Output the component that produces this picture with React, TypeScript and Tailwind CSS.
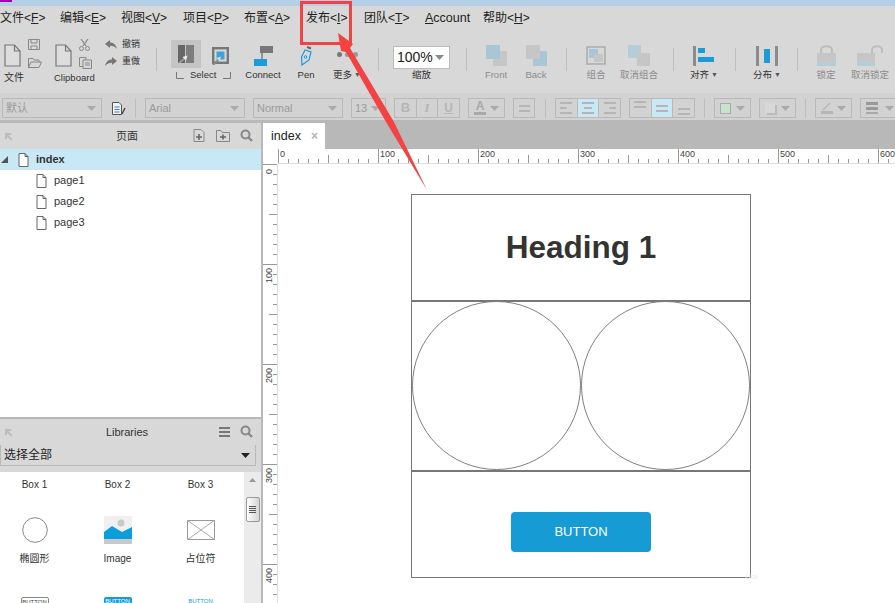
import React from 'react';

const font = { fontFamily: '"Liberation Sans", "Noto Sans CJK SC", sans-serif' };

const menus: [string, string, number][] = [
  ['文件', 'F', 60],
  ['编辑', 'E', 61],
  ['视图', 'V', 62],
  ['项目', 'P', 61],
  ['布置', 'A', 62],
  ['发布', 'I', 58],
  ['团队', 'T', 61],
];

const PageIcon = ({ w = 17, h = 23, c = '#777' }: { w?: number; h?: number; c?: string }) => (
  <svg width={w} height={h} viewBox="0 0 17 23" className="block shrink-0">
    <path d="M1 1H10.5L16 7V22H1Z M10.5 1V7H16" fill="#f4f4f4" fillOpacity="0.2" stroke={c} strokeWidth="1.2" />
  </svg>
);

const SmallPage = ({ c = '#666' }: { c?: string }) => (
  <svg width="11" height="14" viewBox="0 0 11 14" className="block shrink-0">
    <path d="M1 .5H7L10 3.5V13.5H1Z M7 .5V3.5H10" fill="#fff" stroke={c} />
  </svg>
);

const Caret = ({ c = '#999' }: { c?: string }) => (
  <svg width="9" height="5" viewBox="0 0 9 5" className="block shrink-0">
    <path d="M0 0H9L4.5 5Z" fill={c} />
  </svg>
);

const SelectBox = ({ w, label }: { w: number; label: string }) => (
  <div style={{ width: w }} className="h-[20px] shrink-0 border border-[#b9b9b9] flex items-center justify-between pl-[3px] pr-[5px]">
    <span className="text-[11px] text-[#9a9a9a]">{label}</span>
    <Caret c="#aaa" />
  </div>
);

const Sep = ({ h = 23, ml = 0 }: { h?: number; ml?: number }) => (
  <div style={{ height: h, marginLeft: ml }} className="w-px bg-[#bdbdbd] shrink-0" />
);

const Tool = ({ w, ml = 0, label, dark, caret, children }: { w: number; ml?: number; label: string; dark?: boolean; caret?: boolean; children?: React.ReactNode }) => (
  <div style={{ width: w, marginLeft: ml }} className="shrink-0 flex flex-col items-center">
    <div className="h-[24px] flex items-end justify-center">{children}</div>
    <div className={`mt-[3px] text-[9.5px] leading-[12px] whitespace-nowrap flex items-center gap-[2px] ${dark ? 'text-[#333]' : 'text-[#8c8c8c]'}`}>
      {label}
      {caret && <span className="text-[7px] text-[#555]">▼</span>}
    </div>
  </div>
);

const SegGroup = ({ items, active }: { items: React.ReactNode[]; active?: number }) => (
  <div className="flex w-[66px] h-[20px] border border-[#b9b9b9] shrink-0">
    {items.map((it, i) => (
      <div key={i} className={`flex-1 flex items-center justify-center ${i > 0 ? 'border-l border-[#b9b9b9]' : ''} ${active === i ? 'bg-[#c9e8f6]' : ''}`}>
        {it}
      </div>
    ))}
  </div>
);

const Lines = ({ widths, align }: { widths: number[]; align: string }) => (
  <div className={`flex flex-col gap-[3px] ${align}`}>
    {widths.map((w, i) => (
      <div key={i} style={{ width: w }} className="h-[2px] bg-[#b5b5b5]" />
    ))}
  </div>
);

const SwatchSel = ({ w = 37, children }: { w?: number; children: React.ReactNode }) => (
  <div style={{ width: w }} className="h-[20px] shrink-0 border border-[#b9b9b9] flex items-center justify-between pl-[5px] pr-[5px]">
    {children}
    <Caret c="#aaa" />
  </div>
);

const PanelHeader = ({ title, children }: { title: string; children: React.ReactNode }) => (
  <div className="h-[26px] bg-[#d8d8d8] flex items-center pl-[4px] pr-[8px] relative shrink-0">
    <svg width="9" height="9" viewBox="0 0 9 9"><path d="M1 1H7V3H4.5L8.5 7.5L7 8.5L3 4.5V7H1Z" fill="#bbb" /></svg>
    <div className="flex-1 text-center text-[11px] text-[#333] pr-[12px]">{title}</div>
    {children}
  </div>
);

const Search = () => (
  <svg width="13" height="13" viewBox="0 0 13 13"><circle cx="5.5" cy="5.5" r="4" fill="none" stroke="#888" strokeWidth="2" /><path d="M8.5 8.5L12 12" stroke="#888" strokeWidth="2.4" /></svg>
);

const TreeRow = ({ name }: { name: string }) => (
  <div className="h-[21px] flex items-center pl-[36px] gap-[7px]">
    <SmallPage />
    <span className="text-[11px] text-[#333]">{name}</span>
  </div>
);

const Lib = ({ label, children }: { label: string; children: React.ReactNode }) => (
  <div className="w-[83px] flex flex-col items-center">
    <div className="h-[30px] flex items-center justify-center">{children}</div>
    <div className="mt-[7px] h-[14px] text-[10px] leading-[14px] text-[#333]">{label}</div>
  </div>
);

const HRuler = () => {
  const ticks = Array.from({ length: 62 }, (_, i) => i * 10);
  return (
    <svg width="617" height="15" className="block">
      {ticks.map(t => (
        <line key={t} x1={t + 0.5} x2={t + 0.5} y1={t % 100 === 0 ? 0 : t % 50 === 0 ? 6 : 10} y2={14} stroke="#999" />
      ))}
      {[0, 100, 200, 300, 400, 500, 600].map(t => (
        <text key={t} x={t + 2} y={8} fontSize="9" fill="#444" style={font}>{t}</text>
      ))}
      <line x1="0" x2="617" y1="14.5" y2="14.5" stroke="#ddd" />
    </svg>
  );
};

const VRuler = () => {
  const ticks = Array.from({ length: 45 }, (_, i) => i * 10);
  return (
    <svg width="15" height="439" className="block">
      {ticks.map(t => (
        <line key={t} y1={t + 0.5} y2={t + 0.5} x1={t % 100 === 0 ? 0 : t % 50 === 0 ? 6 : 10} x2={14} stroke="#999" />
      ))}
      {[0, 100, 200, 300, 400].map(t => (
        <text key={t} transform={`translate(9 ${t + (t === 0 ? 10 : 19)}) rotate(-90)`} fontSize="9" fill="#444" style={font}>{t}</text>
      ))}
      <line x1="14.5" x2="14.5" y1="0" y2="439" stroke="#ddd" />
    </svg>
  );
};

export default function App() {
  return (
    <div style={font} className="relative w-[895px] h-[603px] overflow-hidden bg-white text-[#222]">
      {/* title strip */}
      <div className="h-[6px] bg-[#b5cfe8]">
        <div className="w-[12px] h-[2px] bg-[#a400b4]" />
      </div>

      {/* menu */}
      <div className="h-[24px] bg-[#d8d8d8] flex items-center text-[12px] text-[#222] whitespace-nowrap">
        {menus.map(([t, k, w]) => (
          <div key={t} style={{ width: w }} className="shrink-0">
            {t}&lt;<span className="underline">{k}</span>&gt;
          </div>
        ))}
        <div className="w-[58px] shrink-0 text-[12.5px]"><span className="underline">A</span>ccount</div>
        <div>帮助&lt;<span className="underline">H</span>&gt;</div>
      </div>

      {/* toolbar */}
      <div className="h-[63px] bg-[#d8d8d8] flex items-start">
        <div className="w-[47px] shrink-0 pl-[4px] pt-[9px] flex gap-[7px]">
          <div className="flex flex-col w-[17px]">
            <div className="h-[5px]" />
            <PageIcon />
            <div className="mt-[5px] text-[10px] leading-[12px] text-[#333] whitespace-nowrap">文件</div>
          </div>
          <div className="flex flex-col gap-[7px]">
            <svg width="12" height="11" viewBox="0 0 12 11"><path d="M.5.5H11.5V10.5H.5Z M3 .5V4H9V.5 M3 10.5V7H9V10.5" fill="none" stroke="#888" /></svg>
            <svg width="14" height="11" viewBox="0 0 14 11"><path d="M.5 10.5V1.5H5L6 3H11V5 M.5 10.5L3 5H13.5L11 10.5Z" fill="none" stroke="#888" /></svg>
          </div>
        </div>
        <div className="w-[48px] shrink-0 ml-[7px] pt-[9px] flex gap-[7px]">
          <div className="flex flex-col w-[18px] items-start">
            <div className="h-[5px]" />
            <div className="pl-[1px]"><PageIcon /></div>
            <div className="mt-[5px] text-[9.5px] leading-[12px] text-[#333] whitespace-nowrap">Clipboard</div>
          </div>
          <div className="flex flex-col gap-[6px]">
            <svg width="11" height="12" viewBox="0 0 11 12"><path d="M2 0L7 7 M9 0L4 7" stroke="#888" strokeWidth="1.2" /><circle cx="2.5" cy="9.5" r="2" fill="none" stroke="#888" /><circle cx="8.5" cy="9.5" r="2" fill="none" stroke="#888" /></svg>
            <svg width="13" height="12" viewBox="0 0 13 12"><path d="M.5.5H7V3 M.5.5V9.5H4 M4 3H12.5V11.5H4Z M6 6H11 M6 8H11" fill="none" stroke="#888" /></svg>
          </div>
        </div>
        <div className="w-[48px] shrink-0 ml-[3px] pt-[9px] flex flex-col gap-[5px]">
          <div className="flex items-center gap-[5px] h-[12px]">
            <svg width="12" height="10" viewBox="0 0 12 10"><path d="M0 4L5 0V2.5C9 2.5 11 5 12 9C10 6.5 8 5.8 5 5.8V8Z" fill="#777" /></svg>
            <span className="text-[9px] text-[#333]">撤销</span>
          </div>
          <div className="flex items-center gap-[5px] h-[12px]">
            <svg width="12" height="10" viewBox="0 0 12 10"><path d="M12 4L7 0V2.5C3 2.5 1 5 0 9C2 6.5 4 5.8 7 5.8V8Z" fill="#777" /></svg>
            <span className="text-[9px] text-[#333]">重做</span>
          </div>
        </div>
        <div className="mt-[18px] ml-[3px]"><Sep /></div>
        {/* select */}
        <div className="ml-[14px] w-[62px] shrink-0 flex flex-col">
          <div className="flex items-start">
            <div className="mt-[10px] w-[30px] h-[28px] bg-[#c4c4c4] flex items-center justify-center">
              <svg width="16" height="18" viewBox="0 0 16 18"><path d="M0 0H7V18H0Z" fill="#666" /><path d="M8 0H16V18H8Z" fill="#7d7d7d" /><path d="M1 18L7 13" stroke="#999" strokeWidth="2" /><path d="M9.5 10.5L4.5 12L8 15.5Z" fill="#eee" /></svg>
            </div>
            <div className="ml-[11px] mt-[17px]">
              <svg width="17" height="18" viewBox="0 0 17 18"><rect x="1.2" y="1.2" width="14.6" height="14.6" fill="none" stroke="#777" strokeWidth="2.4" /><rect x="4.5" y="4.5" width="8" height="8" fill="#3aa5dd" /><path d="M1 18L7 12" stroke="#888" strokeWidth="2" /><path d="M9 9.5L4.5 11L7.5 14Z" fill="#ddd" /></svg>
            </div>
          </div>
          <div className="mt-[1px] flex items-center text-[9.5px] leading-[12px] text-[#333] whitespace-nowrap pl-[5px]">
            <svg width="8" height="7" viewBox="0 0 8 7"><path d="M.5 0V6.5H8" fill="none" stroke="#777" /></svg>
            <span className="ml-[6px] mr-[7px]">Select</span>
            <svg width="8" height="7" viewBox="0 0 8 7"><path d="M7.5 0V6.5H0" fill="none" stroke="#777" /></svg>
          </div>
        </div>
        <div className="mt-[12px] flex items-start">
          <Tool w={40} ml={10} label="Connect" dark>
            <svg width="19" height="20" viewBox="0 0 19 20"><rect x="6" y="0" width="13" height="7" fill="#777" /><path d="M8 7V13" stroke="#777" strokeWidth="1.4" /><rect x="0" y="13" width="13" height="7" fill="#1d9bd8" /></svg>
          </Tool>
          <Tool w={28} ml={9} label="Pen" dark>
            <svg width="14" height="21" viewBox="0 0 14 21"><path d="M8 2L12 3.5" stroke="#666" strokeWidth="2" /><path d="M6 5L12 7L10 15L3 20L2.5 12Z" fill="none" stroke="#1d9bd8" strokeWidth="1.2" /><circle cx="6.5" cy="12" r="1.3" fill="none" stroke="#1d9bd8" /></svg>
          </Tool>
          <Tool w={30} ml={12} label="更多" dark caret>
            <div className="flex gap-[3px] mb-[9px]">
              <div className="w-[5px] h-[5px] rounded-full bg-[#777]" />
              <div className="w-[5px] h-[5px] rounded-full bg-[#999]" />
              <div className="w-[5px] h-[5px] rounded-full bg-[#999]" />
            </div>
          </Tool>
        </div>
        <div className="mt-[18px] ml-[16px]"><Sep /></div>
        <div className="ml-[14px] w-[57px] mt-[16px] shrink-0 flex flex-col items-center">
          <div className="w-[57px] h-[23px] bg-white border border-[#bbb] flex items-center justify-between pl-[3px] pr-[5px]">
            <span className="text-[14px] text-[#222]">100%</span>
            <Caret c="#888" />
          </div>
          <div className="text-[9.5px] leading-[12px] text-[#333]">缩放</div>
        </div>
        <div className="mt-[18px] ml-[16px]"><Sep /></div>
        <div className="mt-[12px] flex items-start">
          <Tool w={30} ml={14} label="Front">
            <svg width="21" height="21" viewBox="0 0 21 21"><path d="M7 6H21V21H7Z" fill="#c6c6c6" /><rect x="0" y="0" width="14" height="14" fill="#a9c6d6" /></svg>
          </Tool>
          <Tool w={30} ml={10} label="Back">
            <svg width="21" height="21" viewBox="0 0 21 21"><path d="M7 6H21V21H7Z" fill="#a9c6d6" /><rect x="0" y="0" width="14" height="14" fill="#c6c6c6" /></svg>
          </Tool>
        </div>
        <div className="mt-[18px] ml-[15px]"><Sep /></div>
        <div className="mt-[12px] flex items-start">
          <Tool w={30} ml={14} label="组合">
            <svg width="22" height="21" viewBox="0 0 22 21"><rect x="2" y="2" width="18" height="17" fill="none" stroke="#aaa" strokeWidth="1.5" /><rect x="4" y="4" width="9" height="9" fill="#a9c6d6" /><rect x="9" y="9" width="9" height="8" fill="#c6c6c6" /></svg>
          </Tool>
          <Tool w={40} ml={8} label="取消组合">
            <svg width="22" height="21" viewBox="0 0 22 21"><rect x="0" y="0" width="13" height="13" fill="#b5cdd8" /><rect x="9" y="8" width="13" height="13" fill="#c6c6c6" /></svg>
          </Tool>
        </div>
        <div className="mt-[18px] ml-[14px]"><Sep /></div>
        <div className="mt-[12px]">
          <Tool w={30} ml={15} label="对齐" dark caret>
            <svg width="22" height="20" viewBox="0 0 22 20"><rect x="0" y="0" width="3" height="20" fill="#8c8c8c" /><rect x="5" y="2" width="7" height="5" fill="#1d9bd8" /><rect x="5" y="11" width="16" height="5" fill="#1d9bd8" /></svg>
          </Tool>
        </div>
        <div className="mt-[18px] ml-[16px]"><Sep /></div>
        <div className="mt-[12px]">
          <Tool w={30} ml={16} label="分布" dark caret>
            <svg width="22" height="20" viewBox="0 0 22 20"><rect x="0" y="0" width="3" height="20" fill="#8c8c8c" /><rect x="8" y="3" width="6" height="14" fill="#1d9bd8" /><rect x="19" y="0" width="3" height="20" fill="#8c8c8c" /></svg>
          </Tool>
        </div>
        <div className="mt-[18px] ml-[15px]"><Sep /></div>
        <div className="mt-[12px] flex items-start">
          <Tool w={22} ml={17} label="锁定">
            <svg width="19" height="22" viewBox="0 0 19 22"><path d="M4 9V6C4 1 15 1 15 6V9" fill="none" stroke="#bdbdbd" strokeWidth="2" /><rect x="0" y="9" width="19" height="9" fill="#c6c6c6" /><rect x="0" y="18" width="19" height="4" fill="#b5cdd8" /></svg>
          </Tool>
          <Tool w={40} ml={13} label="取消锁定">
            <svg width="26" height="22" viewBox="0 0 26 22"><path d="M15 9V6C15 1 25 1 25 6V9" fill="none" stroke="#bdbdbd" strokeWidth="2" /><rect x="0" y="9" width="18" height="9" fill="#c6c6c6" /><rect x="0" y="18" width="18" height="4" fill="#b5cdd8" /></svg>
          </Tool>
        </div>
      </div>

      {/* format bar */}
      <div className="h-[27px] bg-[#d2d2d2] flex items-center pl-[2px] pt-[3px] overflow-hidden">
        <SelectBox w={100} label="默认" />
        <svg className="ml-[10px] shrink-0" width="14" height="13" viewBox="0 0 14 13"><path d="M.5.5H7L9.5 3V12.5H.5Z" fill="#f2f2f2" stroke="#555" /><path d="M2.5 5H7.5 M2.5 7.5H7.5 M2.5 10H7.5" stroke="#3a7ab8" /><path d="M10 12L13 6" stroke="#444" strokeWidth="1.4" /></svg>
        <Sep h={19} ml={9} />
        <div className="ml-[9px]"><SelectBox w={100} label="Arial" /></div>
        <div className="ml-[8px]"><SelectBox w={90} label="Normal" /></div>
        <div className="ml-[8px]"><SelectBox w={35} label="13" /></div>
        <div className="ml-[8px]">
          <SegGroup items={[
            <b key="b" className="text-[13px] text-[#b5b5b5]">B</b>,
            <i key="i" className="text-[13px] text-[#b5b5b5] font-bold" style={{ fontFamily: '"Liberation Serif", serif' }}>I</i>,
            <span key="u" className="text-[12px] text-[#b5b5b5] underline font-bold">U</span>,
          ]} />
        </div>
        <div className="ml-[8px]">
          <SwatchSel>
            <div className="flex flex-col items-center leading-none">
              <span className="text-[12px] leading-[11px] text-[#a8a8a8] font-bold">A</span>
              <div className="w-[12px] h-[3px] bg-[#a8a8a8]" />
            </div>
          </SwatchSel>
        </div>
        <div className="ml-[8px] w-[22px] h-[20px] shrink-0 border border-[#b9b9b9] flex items-center justify-center">
          <Lines widths={[11, 11]} align="items-end" />
        </div>
        <Sep h={19} ml={10} />
        <div className="ml-[9px]">
          <SegGroup active={1} items={[
            <Lines key="l" widths={[12, 7, 12]} align="items-start" />,
            <Lines key="c" widths={[12, 8, 12]} align="items-center" />,
            <Lines key="r" widths={[12, 7, 12]} align="items-end" />,
          ]} />
        </div>
        <div className="ml-[8px]">
          <SegGroup active={1} items={[
            <div key="t" className="self-start pt-[2px]"><Lines widths={[12, 12]} align="items-center" /></div>,
            <Lines key="m" widths={[12, 12]} align="items-center" />,
            <div key="b" className="self-end pb-[2px]"><Lines widths={[12, 12]} align="items-center" /></div>,
          ]} />
        </div>
        <Sep h={19} ml={9} />
        <div className="ml-[9px]">
          <SwatchSel><div className="w-[11px] h-[11px] bg-[#c6e3cc] border border-[#aaa]" /></SwatchSel>
        </div>
        <div className="ml-[8px]">
          <SwatchSel><div className="w-[10px] h-[10px] bg-[#d8d8d8] shadow-[2px_2px_0_#bbb]" /></SwatchSel>
        </div>
        <Sep h={19} ml={9} />
        <div className="ml-[9px]">
          <SwatchSel>
            <svg width="13" height="12" viewBox="0 0 13 12"><path d="M2 8L9 1" stroke="#b5b5b5" strokeWidth="1.5" /><rect x="0" y="9" width="12" height="3" fill="#b5b5b5" /></svg>
          </SwatchSel>
        </div>
        <div className="ml-[8px]">
          <SwatchSel w={40}>
            <div className="flex flex-col gap-[2px]">
              <div className="w-[12px] h-[3px] bg-[#999]" />
              <div className="w-[12px] h-[3px] bg-[#999]" />
              <div className="w-[12px] h-[2px] bg-[#aaa]" />
            </div>
          </SwatchSel>
        </div>
      </div>

      <div className="h-[3px] bg-[#b8b8b8]" />

      {/* body */}
      <div className="flex h-[480px]">
        {/* left panels */}
        <div className="w-[261px] shrink-0 flex flex-col">
          <PanelHeader title="页面">
            <div className="flex items-center gap-[10px] absolute right-[8px] top-[6px]">
              <svg width="13" height="13" viewBox="0 0 13 13"><path d="M1 .5H8L11 3.5V12.5H1Z" fill="none" stroke="#888" /><path d="M3 8H9 M6 5V11" stroke="#666" strokeWidth="1.6" /></svg>
              <svg width="14" height="12" viewBox="0 0 14 12"><path d="M.5 11.5V.5H5L6.5 2.5H13.5V11.5Z" fill="none" stroke="#888" /><path d="M4 7H10 M7 4.5V9.5" stroke="#666" strokeWidth="1.6" /></svg>
              <Search />
            </div>
          </PanelHeader>
          <div className="h-[268px] bg-white shrink-0">
            <div className="h-[21px] bg-[#c9e8f6] flex items-center pl-[1px]">
              <svg width="7" height="7" viewBox="0 0 7 7"><path d="M7 0V7H0Z" fill="#555" /></svg>
              <div className="ml-[10px]"><SmallPage /></div>
              <span className="ml-[7px] text-[11px] font-bold text-[#333]">index</span>
            </div>
            <TreeRow name="page1" />
            <TreeRow name="page2" />
            <TreeRow name="page3" />
          </div>
          <div className="h-[2px] bg-[#b8b8b8] shrink-0" />
          <PanelHeader title="Libraries">
            <div className="flex items-center gap-[10px] absolute right-[8px] top-[6px]">
              <div className="flex flex-col gap-[2px]">
                <div className="w-[11px] h-[2px] bg-[#777]" />
                <div className="w-[11px] h-[2px] bg-[#777]" />
                <div className="w-[11px] h-[2px] bg-[#777]" />
              </div>
              <Search />
            </div>
          </PanelHeader>
          <div className="h-[27px] bg-[#d8d8d8] shrink-0">
            <div className="w-[256px] h-[22px] -mt-px border border-[#b9b9b9] flex items-center justify-between pl-[3px] pr-[5px]">
              <span className="text-[12px] text-[#222]">选择全部</span>
              <Caret c="#222" />
            </div>
          </div>
          <div className="flex flex-1 min-h-0 bg-white overflow-hidden">
            <div className="w-[244px] overflow-hidden">
              <div className="flex -ml-[7px] h-[24px] items-center">
                {['Box 1', 'Box 2', 'Box 3'].map(b => (
                  <div key={b} className="w-[83px] text-center text-[10px] text-[#333]">{b}</div>
                ))}
              </div>
              <div className="flex -ml-[7px] mt-[19px]">
                <Lib label="椭圆形">
                  <svg width="26" height="26" viewBox="0 0 26 26"><circle cx="13" cy="13" r="12.3" fill="#fff" stroke="#888" /></svg>
                </Lib>
                <Lib label="Image">
                  <svg width="28" height="28" viewBox="0 0 28 28"><rect width="28" height="28" fill="#f0f0f0" /><rect y="23" width="28" height="5" fill="#c9c9c9" /><path d="M0 16L8 10L18 16L28 11V23H0Z" fill="#0a9fdc" /><circle cx="17" cy="7" r="3.5" fill="#c9c9c9" /></svg>
                </Lib>
                <Lib label="占位符">
                  <svg width="28" height="20" viewBox="0 0 28 20"><rect x=".5" y=".5" width="27" height="19" fill="#fff" stroke="#999" /><path d="M0 0L28 20 M28 0L0 20" stroke="#aaa" /></svg>
                </Lib>
              </div>
              <div className="flex -ml-[7px] mt-[31px]">
                <div className="w-[83px] flex justify-center">
                  <div className="w-[28px] h-[14px] border border-[#888] rounded-[2px] text-[6px] text-center text-[#444]">BUTTON</div>
                </div>
                <div className="w-[83px] flex justify-center">
                  <div className="w-[28px] h-[14px] bg-[#169bd5] rounded-[2px] text-[6px] text-center text-white">BUTTON</div>
                </div>
                <div className="w-[83px] flex justify-center">
                  <div className="w-[28px] text-[6px] text-center text-[#169bd5]">BUTTON</div>
                </div>
              </div>
            </div>
            <div className="w-[17px] bg-[#ebebeb] flex flex-col items-center pt-[6px]">
              <svg width="7" height="4" viewBox="0 0 7 4"><path d="M3.5 0L7 4H0Z" fill="#999" /></svg>
              <div className="mt-[15px] w-[14px] h-[25px] border border-[#999] rounded-[2px] bg-gradient-to-r from-white to-[#d4d4d4] flex flex-col items-center justify-center gap-[1px]">
                <div className="w-[7px] h-px bg-[#555]" />
                <div className="w-[7px] h-px bg-[#555]" />
                <div className="w-[7px] h-px bg-[#555]" />
                <div className="w-[7px] h-px bg-[#555]" />
              </div>
            </div>
          </div>
        </div>

        <div className="w-[2px] bg-[#b8b8b8] shrink-0" />

        {/* canvas side */}
        <div className="flex-1 min-w-0 flex flex-col">
          <div className="h-[26px] bg-[#b8b8b8] shrink-0">
            <div className="w-[62px] h-full bg-white flex items-center pl-[8px] gap-[10px]">
              <span className="text-[12.5px] font-medium text-[#222]">index</span>
              <span className="text-[12px] font-bold text-[#b5b5b5] leading-none">×</span>
            </div>
          </div>
          <div className="h-[15px] flex shrink-0">
            <div className="w-[15px] shrink-0" />
            <HRuler />
          </div>
          <div className="flex flex-1 min-h-0">
            <div className="w-[15px] shrink-0"><VRuler /></div>
            <div className="flex-1 min-w-0 relative">
              {/* wireframe on the page canvas */}
              <div className="ml-[133px] mt-[30px] w-[340px] h-[384px] border border-[#777] flex flex-col bg-white">
                <div className="h-[107px] flex items-center justify-center border-b-2 border-[#777] shrink-0">
                  <span className="text-[31.5px] font-bold text-[#333] leading-none">Heading 1</span>
                </div>
                <div className="h-[170px] flex border-b-2 border-[#777] shrink-0">
                  <div className="w-[169px] h-[169px] -mt-px rounded-full border border-[#808080]" />
                  <div className="w-[169px] h-[169px] -mt-px rounded-full border border-[#808080]" />
                </div>
                <div className="flex-1 flex items-center justify-center pt-[15px]">
                  <div className="w-[140px] h-[40px] bg-[#169bd5] rounded-[4px] flex items-center justify-center text-[13px] text-white">BUTTON</div>
                </div>
              </div>
              <div className="absolute left-[467px] top-[407px] text-[8px] text-[#ececec]">Uol</div>
            </div>
          </div>
        </div>
      </div>

      {/* annotation over the screenshot */}
      <div className="absolute left-[300px] top-[1px] w-[52px] h-[44px] border-[3px] border-[#f44242]" />
      <svg className="absolute left-0 top-0 pointer-events-none" width="895" height="603" viewBox="0 0 895 603">
        <path d="M338 33L353 44L350 48L394 122L427 190L386 122L346 52L341 51Z" fill="#f44242" />
      </svg>
    </div>
  );
}
